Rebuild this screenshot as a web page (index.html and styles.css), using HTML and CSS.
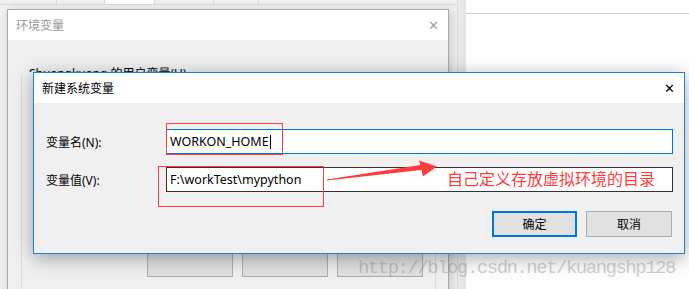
FILE: index.html
```html
<!DOCTYPE html>
<html lang="zh-CN">
<head>
    <meta charset="UTF-8">
    <meta name="viewport" content="width=device-width, initial-scale=1.0">
    <title>新建系统变量</title>
    <link rel="stylesheet" href="styles.css">
</head>
<body>

    <div class="screen">
        <!-- desktop behind the dialogs -->
        <div class="backdrop">
            <div class="sys-window">
                <div class="tabs">
                    <span class="tab tab-a"></span>
                    <span class="tab tab-b"></span>
                    <span class="tab tab-sel"></span>
                    <span class="tab tab-c"></span>
                    <span class="tab tab-d"></span>
                    <span class="tab tab-rest"></span>
                </div>
            </div>
            <div class="sys-gap"></div>
            <div class="side-pane"><div class="side-line"></div></div>
        </div>

        <!-- 环境变量 dialog -->
        <div class="env-dialog">
            <div class="env-title">
                <span>环境变量</span>
                <span class="close close-dim">&#x2715;</span>
            </div>
            <div class="env-body">
                <div class="user-caption">Shuangkuang 的用户变量(U)</div>
                <div class="group-box">
                    <div class="env-buttons">
                        <span class="env-btn"></span>
                        <span class="env-btn"></span>
                        <span class="env-btn"></span>
                    </div>
                </div>
            </div>
        </div>

        <!-- 新建系统变量 dialog -->
        <div class="new-dialog">
            <div class="new-title">
                <span>新建系统变量</span>
                <span class="close">&#x2715;</span>
            </div>
            <div class="new-body">
                <div class="form">
                    <label class="label">变量名(N):</label>
                    <div class="field field-focus"><span>WORKON_HOME</span><span class="caret"></span></div>
                    <label class="label">变量值(V):</label>
                    <div class="field field-hover"><span>F:\workTest\mypython</span></div>
                </div>
                <div class="actions">
                    <button class="btn btn-default">确定</button>
                    <button class="btn btn-cancel">取消</button>
                </div>
            </div>
        </div>

        <!-- annotations drawn on the screenshot -->
        <div class="mark mark-name"></div>
        <div class="mark mark-value"></div>
        <svg class="arrow" width="689" height="289" viewBox="0 0 689 289">
            <polygon points="327,179.5 420.5,165 419,160.5 437,166.5 423,176.5 421.5,170 327,180.5" fill="#ff3b3b"/>
        </svg>
        <div class="note">自己定义存放虚拟环境的目录</div>

        <div class="watermark">http://blog.csdn.net/kuangshp128</div>
    </div>

</body>
</html>
```

FILE: styles.css
```css
body {
    margin: 0;
    font-family: "Noto Sans", "Noto Sans CJK SC", sans-serif;
    font-size: 12px;
    color: #000;
    background: #fff;
}
.screen {
    position: relative;
    width: 689px;
    height: 289px;
    overflow: hidden;
}

/* background windows */
.backdrop {
    display: flex;
    height: 100%;
}
.sys-window {
    width: 457px;
    background: #f0f0f0;
    border-right: 1px solid #dcdcdc;
}
.tabs {
    display: flex;
    height: 4px;
    border-bottom: 1px solid #d9d9d9;
}
.tab {
    border-right: 1px solid #d9d9d9;
    background: #f0f0f0;
}
.tab-a { width: 56px; }
.tab-b { width: 47px; }
.tab-sel { width: 49px; background: #fff; }
.tab-c { width: 58px; }
.tab-d { width: 44px; }
.tab-rest { flex: 1; border-right: none; }
.sys-gap {
    width: 8px;
    background: linear-gradient(to right, #ececec, #e4e4e4);
}
.side-pane {
    flex: 1;
    padding-top: 13px;
    background: #fff;
}
.side-line {
    border-top: 1px solid #d2d2d2;
}

/* 环境变量 */
.env-dialog {
    position: absolute;
    left: 7px;
    top: 9px;
    width: 440px;
    height: 300px;
    border: 1px solid #a9a9a9;
    background: #f0f0f0;
    box-shadow: 2px 2px 10px rgba(0, 0, 0, 0.18);
}
.env-title {
    display: flex;
    justify-content: space-between;
    align-items: center;
    height: 30px;
    padding: 0 9px 0 8px;
    background: #fff;
    color: #9a9a9a;
}
.close {
    font-family: "DejaVu Sans", sans-serif;
    font-size: 13px;
    line-height: 1;
}
.close-dim {
    color: #a0a0a0;
}
.env-body {
    padding: 27px 13px 0 13px;
}
/* only the top of this line peeks out above the new dialog */
.user-caption {
    margin-left: 8px;
    height: 5px;
    overflow: hidden;
    line-height: 14px;
    margin-bottom: 2px;
}
.group-box {
    height: 202px;
    margin-right: -1px;
    border: 1px solid #dcdcdc;
    border-top-color: #f0f0f0;
    display: flex;
    align-items: flex-end;
    justify-content: flex-end;
    padding: 0 12px 17px 0;
}
.env-buttons {
    display: flex;
    gap: 9px;
}
.env-btn {
    width: 84px;
    height: 23px;
    border: 1px solid #adadad;
    background: #e1e1e1;
}

/* 新建系统变量 */
.new-dialog {
    position: absolute;
    left: 33px;
    top: 72px;
    width: 650px;
    height: 180px;
    border: 1px solid #1883d7;
    background: #f0f0f0;
    box-shadow: 0 4px 18px rgba(0, 0, 0, 0.35);
}
.new-title {
    display: flex;
    justify-content: space-between;
    align-items: center;
    height: 30px;
    padding: 0 9px 0 8px;
    background: #fff;
}
.new-body {
    padding: 26px 11px 16px 12px;
}
.form {
    display: grid;
    grid-template-columns: 120px 1fr;
    row-gap: 13px;
    align-items: center;
}
.field {
    display: flex;
    align-items: center;
    height: 23px;
    padding-left: 3px;
    background: #fff;
    font-size: 12.5px;
}
.field-focus {
    border: 1px solid #0078d7;
}
.field-hover {
    border: 1px solid #333;
}
.caret {
    width: 1px;
    height: 14px;
    margin-left: 1px;
    background: #000;
}
.actions {
    display: flex;
    justify-content: flex-end;
    gap: 9px;
    margin-top: 19px;
    padding-right: 1px;
}
.btn {
    height: 26px;
    font-family: inherit;
    font-size: 12px;
    background: #e1e1e1;
    color: #000;
    padding: 0;
}
.btn-default {
    width: 85px;
    border: 2px solid #0078d7;
}
.btn-cancel {
    width: 86px;
    border: 1px solid #adadad;
}

/* red annotations */
.mark {
    position: absolute;
    border: 1px solid #ff3b3b;
}
.mark-name {
    left: 166px;
    top: 123px;
    width: 115px;
    height: 30px;
}
.mark-value {
    left: 158px;
    top: 166px;
    width: 164px;
    height: 39px;
}
.arrow {
    position: absolute;
    left: 0;
    top: 0;
}
.note {
    position: absolute;
    left: 447px;
    top: 170px;
    font-family: "Noto Sans CJK SC", sans-serif;
    font-size: 16px;
    line-height: 16px;
    color: #ff3b3b;
}
.watermark {
    position: absolute;
    left: 358px;
    top: 258px;
    font-family: "Liberation Mono", monospace;
    font-size: 19px;
    letter-spacing: -1.5px;
    line-height: 20px;
    color: rgba(110, 110, 110, 0.35);
}
```
